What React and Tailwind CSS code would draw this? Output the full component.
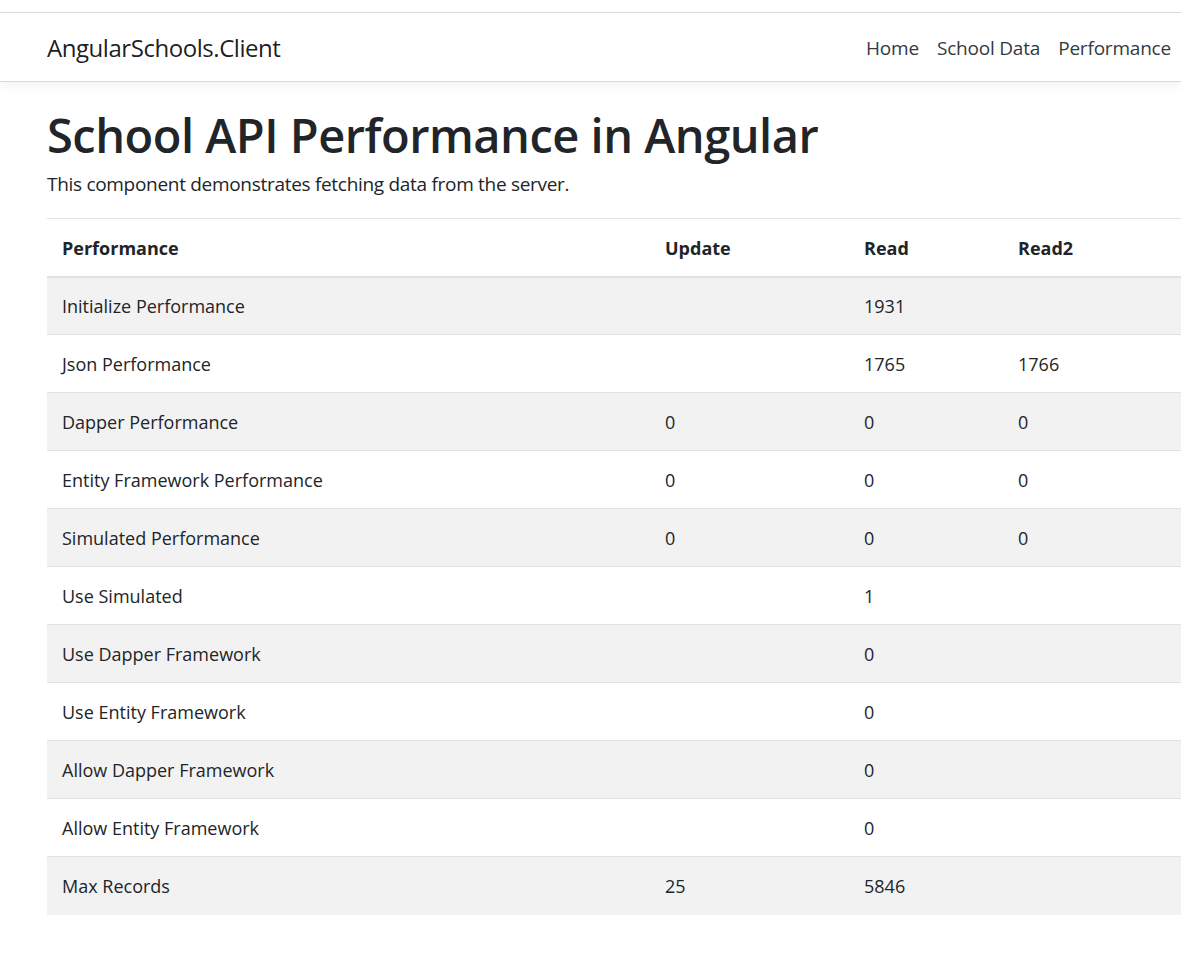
import React from 'react';

const rows = [
  { name: 'Initialize Performance', update: '', read: '1931', read2: '' },
  { name: 'Json Performance', update: '', read: '1765', read2: '1766' },
  { name: 'Dapper Performance', update: '0', read: '0', read2: '0' },
  { name: 'Entity Framework Performance', update: '0', read: '0', read2: '0' },
  { name: 'Simulated Performance', update: '0', read: '0', read2: '0' },
  { name: 'Use Simulated', update: '', read: '1', read2: '' },
  { name: 'Use Dapper Framework', update: '', read: '0', read2: '' },
  { name: 'Use Entity Framework', update: '', read: '0', read2: '' },
  { name: 'Allow Dapper Framework', update: '', read: '0', read2: '' },
  { name: 'Allow Entity Framework', update: '', read: '0', read2: '' },
  { name: 'Max Records', update: '25', read: '5846', read2: '' },
];

const App = () => {
  return (
    <div
      className="min-h-[973px] w-[1181px] overflow-hidden bg-white text-[#212529]"
      style={{ fontFamily: '"Open Sans", "Noto Sans", sans-serif' }}
    >
      <div className="h-3" />
      {/* navbar */}
      <nav className="relative z-10 h-[70px] border-t border-b border-[#dadada] bg-white shadow-[0_4px_10px_rgba(0,0,0,0.05)]">
        <div className="flex h-full items-center pt-[2px] pl-[47px] pr-[1px]">
          <a className="text-[24px] tracking-[-0.45px] text-[rgba(0,0,0,0.9)]">AngularSchools.Client</a>
          <ul className="ml-auto flex items-center text-[19px] tracking-[-0.2px] text-[#343a40]">
            <li className="px-[9px]">Home</li>
            <li className="px-[9px]">School Data</li>
            <li className="px-[9px]">Performance</li>
          </ul>
        </div>
      </nav>

      <main className="pl-[47px]">
        <h1 className="mt-[24px] text-[47px] font-semibold leading-[58px] tracking-[-0.5px]">
          School API Performance in Angular
        </h1>
        <p className="mt-[6px] text-[19px] leading-[29px] tracking-[-0.3px]">
          This component demonstrates fetching data from the server.
        </p>

        <table className="mt-[19px] w-[1300px] border-collapse text-[18px]">
          <thead>
            <tr className="h-[58px] border-t border-b-2 border-[#dee2e6]">
              <th className="w-[603px] px-[15px] pt-[2px] text-left font-bold">Performance</th>
              <th className="w-[199px] px-[15px] pt-[2px] text-left font-bold">Update</th>
              <th className="w-[154px] px-[15px] pt-[2px] text-left font-bold">Read</th>
              <th className="px-[15px] pt-[2px] text-left font-bold">Read2</th>
            </tr>
          </thead>
          <tbody>
            {rows.map((r, i) => (
              <tr
                key={r.name}
                className={
                  'h-[58px] border-t border-[#dee2e6] first:border-t-0 ' +
                  (i % 2 === 0 ? 'bg-[#f2f2f2]' : 'bg-white')
                }
              >
                <td className="px-[15px] pt-[2px]">{r.name}</td>
                <td className="px-[15px] pt-[2px]">{r.update}</td>
                <td className="px-[15px] pt-[2px]">{r.read}</td>
                <td className="px-[15px] pt-[2px]">{r.read2}</td>
              </tr>
            ))}
          </tbody>
        </table>
      </main>
    </div>
  );
};

export default App;
